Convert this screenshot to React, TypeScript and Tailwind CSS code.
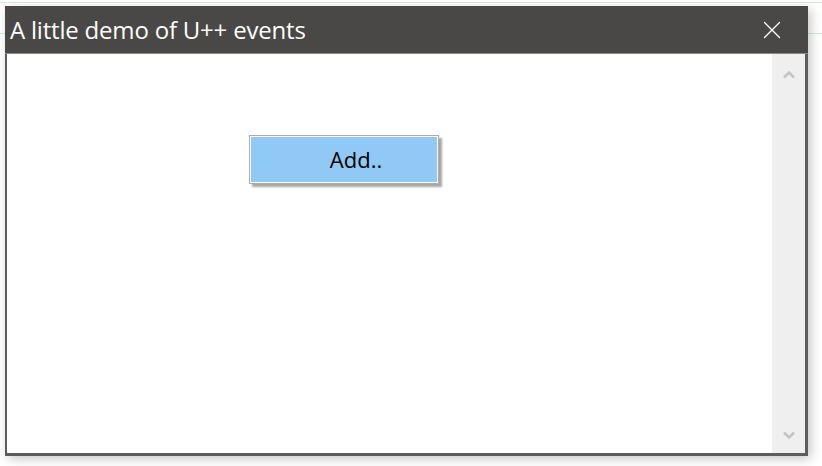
import { X } from "lucide-react";

function Chevron({ down }: { down?: boolean }) {
  return (
    <svg width="12" height="9" viewBox="0 0 12 9" className="text-[#c4c4c4]">
      <polyline
        points={down ? "1,1.5 6,6.5 11,1.5" : "1,7.5 6,2.5 11,7.5"}
        fill="none"
        stroke="currentColor"
        strokeWidth="2.6"
      />
    </svg>
  );
}

export default function App() {
  return (
    <div className="relative h-[466px] w-[822px] overflow-hidden bg-white font-['Open_Sans',sans-serif]">
      {/* faint lines of the app behind the window */}
      <div className="absolute left-0 top-[2px] h-px w-full bg-[#d3efd3]" />
      <div className="absolute left-0 top-[33px] h-px w-full bg-[#d3efd3]" />

      <div className="relative ml-[5px] mt-[6px] flex h-[450px] w-[803px] flex-col shadow-[3px_3px_10px_rgba(0,0,0,0.22)]">
        {/* Title bar */}
        <div className="flex h-[48px] items-center justify-between border-b border-[#8a8a8a] bg-[#4a4846] pl-[5px] pr-[21px]">
          <span className="text-[24px] leading-none tracking-[-0.2px] text-white">A little demo of U++ events</span>
          <X className="h-[30px] w-[30px] text-white" strokeWidth={1.1} />
        </div>

        {/* Body */}
        <div className="flex flex-1 border-b-[3px] border-l-2 border-r-[3px] border-[#5c5c5c] bg-white">
          <div className="flex-1 pl-[242px] pt-[81px]">
            <button className="flex h-[49px] w-[190px] items-center justify-center border border-[#adadad] bg-[#90c8f6] pl-[24px] text-[22px] text-black shadow-[3px_3px_2px_rgba(0,0,0,0.35)] outline outline-1 -outline-offset-2 outline-white">
              Add..
            </button>
          </div>
          <div className="flex w-[33px] flex-col items-center justify-between bg-[#efefef] pb-[13px] pt-[16px]">
            <Chevron />
            <Chevron down />
          </div>
        </div>
      </div>
    </div>
  );
}
